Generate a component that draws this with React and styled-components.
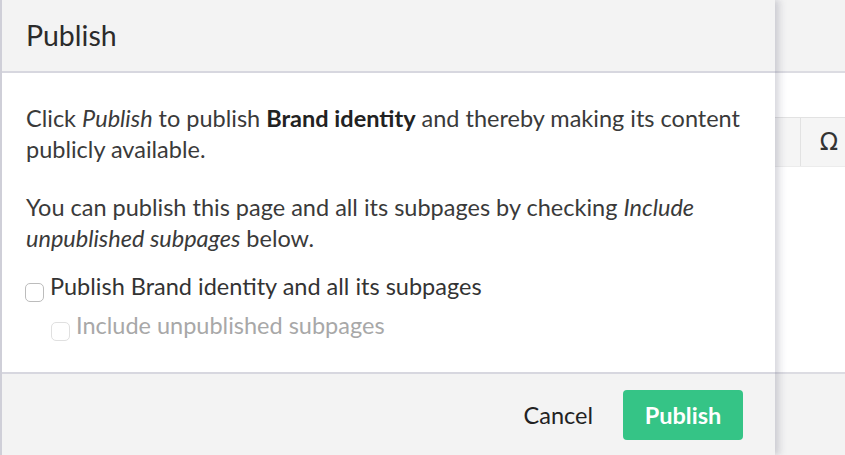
import React from "react";
import styled, { createGlobalStyle } from "styled-components";

const Global = createGlobalStyle`
  html, body {
    margin: 0;
    padding: 0;
    background: #ffffff;
  }
  body {
    font-family: Lato, "Open Sans", sans-serif;
    color: #333;
  }
`;

const Page = styled.div`
  display: flex;
  width: 845px;
  height: 455px;
  overflow: hidden;
  background: #fff;
`;

const Dialog = styled.div`
  position: relative;
  z-index: 1;
  width: 773px;
  flex: none;
  display: flex;
  flex-direction: column;
  background: #fff;
  border-left: 2px solid #cfcfd8;
  box-shadow: 3px 0 6px rgba(60, 60, 90, 0.16), 8px 0 6px rgba(60, 60, 90, 0.05);
`;

const Header = styled.div`
  height: 71px;
  flex: none;
  display: flex;
  align-items: center;
  padding: 0 24px;
  background: #f3f3f3;
  border-bottom: 2px solid #d7d7df;
`;

const Title = styled.h2`
  margin: 0 0 2px;
  font-size: 28.5px;
  font-weight: 400;
  color: #2b2b2b;
`;

const Body = styled.div`
  flex: 1;
  padding: 30px 18px 0 24px;
`;

const Text = styled.p`
  margin: 0 0 27px;
  font-size: 23.5px;
  line-height: 31px;
  color: #3a3a3a;

  strong {
    color: #222;
    font-weight: 700;
  }
`;

const Option = styled.label`
  display: flex;
  align-items: flex-start;
  gap: 6px;
  margin: ${p => (p.$nested ? "8px 0 0 25px" : "-10px 0 0 -1px")};
  font-size: 23.5px;
  line-height: 31px;
  color: ${p => (p.$disabled ? "#a8a8a8" : "#333")};
`;

const Box = styled.input.attrs({ type: "checkbox" })`
  appearance: none;
  margin: 12px 0 0;
  width: 19px;
  height: 19px;
  flex: none;
  border: 1.5px solid ${p => (p.disabled ? "#e0e0e0" : "#bcbcbc")};
  border-radius: 5px;
  background: #fff;
`;

const Footer = styled.div`
  height: 81px;
  flex: none;
  display: flex;
  align-items: center;
  justify-content: flex-end;
  gap: 30px;
  padding: 0 32px 0 0;
  background: #f3f3f3;
  border-top: 2px solid #d7d7df;
`;

const CancelButton = styled.button`
  border: 0;
  background: none;
  padding: 0;
  font-family: inherit;
  font-size: 23.5px;
  color: #222;
  cursor: pointer;
`;

const PrimaryButton = styled.button`
  height: 50px;
  width: 120px;
  padding: 0;
  border: 0;
  border-radius: 4px;
  background: #35c486;
  color: #fff;
  font-family: inherit;
  font-size: 23.5px;
  font-weight: 700;
  cursor: pointer;
`;

const Backdrop = styled.div`
  flex: 1;
  display: flex;
  flex-direction: column;
  background: #fff;
`;

const BackTop = styled.div`
  height: 71px;
  flex: none;
  background: #f3f3f3;
  border-bottom: 2px solid #dcdce2;
`;

const Toolbar = styled.div`
  margin-top: 44px;
  height: 48px;
  display: flex;
  align-items: stretch;
  background: #f5f5f5;
  border-top: 1px solid #e2e2e2;
  border-bottom: 1px solid #ececec;
`;

const ToolButton = styled.div`
  display: flex;
  align-items: center;
  justify-content: center;
  width: 56px;
  margin-left: 25px;
  border-left: 1px solid #e2e2e2;
  font-family: "DejaVu Sans", sans-serif;
  font-size: 24px;
  color: #333;
`;

const Spacer = styled.div`
  flex: 1;
`;

const BackBottom = styled.div`
  height: 81px;
  flex: none;
  background: #f3f3f3;
  border-top: 2px solid #dcdce2;
`;

export default function App() {
  return (
    <>
      <Global />
      <Page>
        <Dialog>
          <Header>
            <Title>Publish</Title>
          </Header>
          <Body>
            <Text>
              Click <em>Publish</em> to publish <strong>Brand identity</strong> and
              thereby making its content publicly available.
            </Text>
            <Text>
              You can publish this page and all its subpages by checking{" "}
              <em>Include unpublished subpages</em> below.
            </Text>
            <Option>
              <Box />
              Publish Brand identity and all its subpages
            </Option>
            <Option $nested $disabled>
              <Box disabled />
              Include unpublished subpages
            </Option>
          </Body>
          <Footer>
            <CancelButton>Cancel</CancelButton>
            <PrimaryButton>Publish</PrimaryButton>
          </Footer>
        </Dialog>
        <Backdrop>
          <BackTop />
          <Toolbar>
            <ToolButton>Ω</ToolButton>
          </Toolbar>
          <Spacer />
          <BackBottom />
        </Backdrop>
      </Page>
    </>
  );
}
